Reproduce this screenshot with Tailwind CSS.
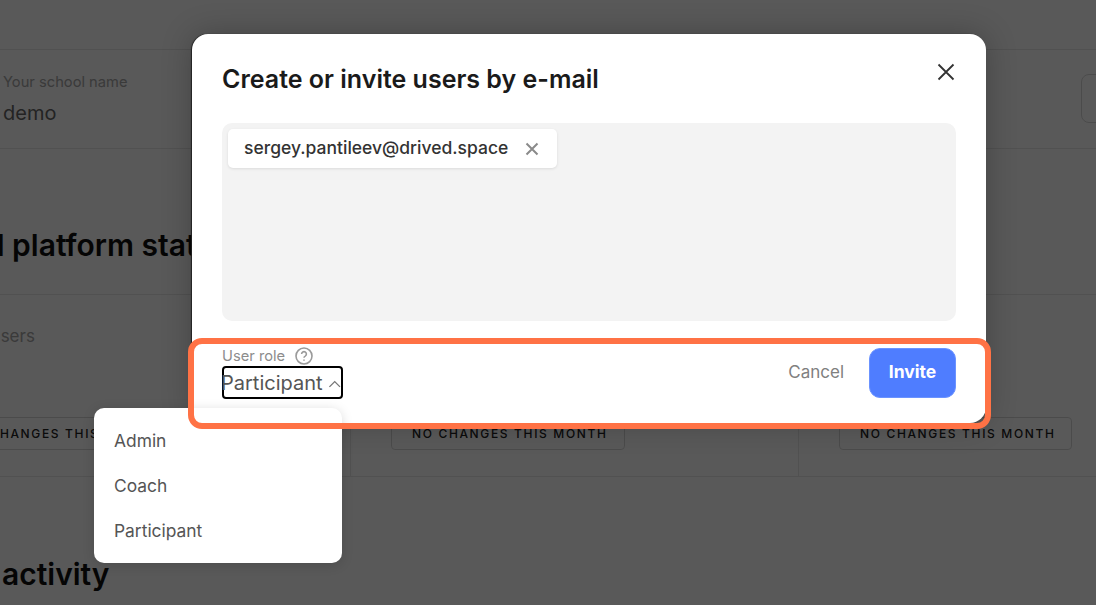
<!DOCTYPE html>
<html lang="en">
<head>
<meta charset="UTF-8">
<title>Create or invite users</title>
<script src="https://cdn.jsdelivr.net/npm/@tailwindcss/browser@4"></script>
</head>
<body class="font-['Inter',sans-serif]">
<div class="relative w-[1096px] h-[605px] overflow-hidden bg-white">

  <!-- page behind the dialog -->
  <div class="w-[1096px]">
    <div class="h-[50px] border-b border-[#e8e8e8]"></div>
    <div class="h-[99px] border-b border-[#e8e8e8] flex justify-between pl-[3px] pt-[24px]">
      <div>
        <p class="text-[14.7px] leading-[17px] text-[#a6a6a6]">Your school name</p>
        <p class="mt-[10px] text-[20px] leading-[24px] text-[#666]">demo</p>
      </div>
      <div class="w-[40px] h-[49px] -mr-[25px] border border-[#d8d8d8] rounded-[8px]"></div>
    </div>
    <div class="h-[146px] border-b border-[#e8e8e8] overflow-hidden pt-[78px]">
      <h2 class="-ml-[67px] text-[30px] leading-[36px] font-semibold text-[#111] whitespace-nowrap">Total platform statistics</h2>
    </div>
    <div class="h-[182px] border-b border-[#e8e8e8] -ml-[97px] w-[1344px] grid grid-cols-3">
      <div class="pt-[31px] pl-[39px] border-r border-[#e8e8e8]">
        <p class="text-[17px] leading-[20px] text-[#a6a6a6] pl-[46px]">Users</p>
        <div class="mt-[71px] w-[233px] h-[33px] pl-[20px] border border-[#d8d8d8] rounded-[4px] flex items-center text-[12px] font-medium tracking-[1.65px] text-[#222] whitespace-nowrap">NO CHANGES THIS MONTH</div>
      </div>
      <div class="pt-[122px] pl-[40px] border-r border-[#e8e8e8]">
        <div class="w-[234px] h-[33px] pl-[20px] border border-[#d8d8d8] rounded-[4px] flex items-center text-[12px] font-medium tracking-[1.65px] text-[#222] whitespace-nowrap">NO CHANGES THIS MONTH</div>
      </div>
      <div class="pt-[122px] pl-[40px]">
        <div class="w-[233px] h-[33px] pl-[20px] border border-[#d8d8d8] rounded-[4px] flex items-center text-[12px] font-medium tracking-[1.65px] text-[#222] whitespace-nowrap">NO CHANGES THIS MONTH</div>
      </div>
    </div>
    <h2 class="mt-[79px] pl-[2px] text-[30px] leading-[36px] font-semibold text-[#111]">activity</h2>
  </div>

  <div class="absolute inset-0 bg-black/65"></div>

  <!-- dialog -->
  <div class="absolute left-[192px] top-[34px] w-[794px] h-[389px] bg-white rounded-[16px] px-[30px] shadow-[-1px_0_1px_#222,0_0_30px_rgba(0,0,0,0.25)]">
    <div class="flex justify-between items-start pt-[29px]">
      <h1 class="text-[25px] leading-[33px] font-semibold text-[#1a1a1a]">Create or invite users by e-mail</h1>
      <svg class="mt-[-1px]" width="20" height="20" viewBox="0 0 20 20" fill="none" stroke="#333" stroke-width="1.8"><path d="M2.5 2.5l15 15M17.5 2.5l-15 15"/></svg>
    </div>
    <div class="mt-[27px] h-[198px] bg-[#f3f3f3] rounded-[10px] p-[6px]">
      <div class="inline-flex items-center h-[39px] w-[329px] pl-[16px] bg-white rounded-[5px] shadow-[0_1px_3px_rgba(0,0,0,0.1)]">
        <span class="text-[17.5px] font-medium text-[#333] whitespace-nowrap">sergey.pantileev@drived.space</span>
        <svg class="ml-[17px]" width="14" height="14" viewBox="0 0 14 14" fill="none" stroke="#8a8a8a" stroke-width="2"><path d="M1.5 1.5l11 11M12.5 1.5l-11 11"/></svg>
      </div>
    </div>
    <div class="mt-[27px] flex justify-between">
      <div>
        <div class="flex items-center gap-[10px] h-[16px]">
          <span class="text-[14.7px] leading-[16px] text-[#8c8c8c]">User role</span>
          <svg width="18" height="18" viewBox="0 0 18 18" fill="none" stroke="#9a9a9a" stroke-width="1.6"><circle cx="9" cy="9" r="8"/><path d="M6.6 7a2.4 2.4 0 1 1 3.6 2.1c-.8.4-1.2.9-1.2 1.7"/><path d="M9 12.4v1.4"/></svg>
        </div>
        <div class="mt-[2px] w-[121px] h-[33px] border-2 border-black rounded-[4px] flex items-center whitespace-nowrap">
          <span class="-ml-[3px] text-[20px] leading-[24px] text-[#555]">Participant</span>
          <svg class="ml-[5px] mt-[2px]" width="14" height="8" viewBox="0 0 14 8" fill="none" stroke="#777" stroke-width="1.4"><path d="M1.5 7L7 1.5 12.5 7"/></svg>
        </div>
      </div>
      <div class="flex items-start">
        <button class="mt-[13px] text-[17px] leading-[22px] text-[#808080]">Cancel</button>
        <button class="ml-[25px] w-[87px] h-[50px] pb-[2px] bg-[#4f7dff] border border-[#6b93ff] rounded-[11px] text-[17.5px] font-bold text-white">Invite</button>
      </div>
    </div>
  </div>

  <!-- role dropdown -->
  <ul class="absolute left-[94px] top-[408px] w-[248px] h-[155px] bg-white rounded-[10px] py-[10px] shadow-[0_2px_12px_rgba(0,0,0,0.15)] text-[17.4px] leading-[45px] text-[#555]">
    <li class="pl-[20px]">Admin</li>
    <li class="pl-[20px]">Coach</li>
    <li class="pl-[20px]">Participant</li>
  </ul>

  <!-- highlight drawn over the screenshot -->
  <div class="absolute left-[188px] top-[338px] w-[803px] h-[91px] border-[6px] border-[#ff7245] rounded-[14px]"></div>
</div>
</body>
</html>
